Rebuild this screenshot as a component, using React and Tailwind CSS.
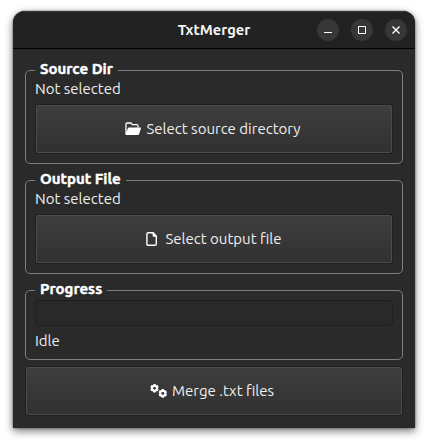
function Group({ title, titleClass, className, children }) {
  return (
    <fieldset className={`min-w-0 rounded-[5px] border border-[#7d7d7d] px-[9px] ${className}`}>
      <legend className={`h-[21px] px-[5px] text-[15px] font-bold leading-[18px] whitespace-nowrap text-white [-webkit-text-stroke:0.4px_white] ${titleClass}`}>
        {title}
      </legend>
      {children}
    </fieldset>
  );
}

function Button({ icon, label, className }) {
  return (
    <button className="block h-[50px] w-full rounded-[3px] border border-[#202020] text-[15px] text-[#efefef]">
      <span className={`flex h-[48px] items-center justify-center rounded-[2px] border border-[#4b4b4b] bg-linear-to-b from-[#3e3e3e] to-[#313131] ${className}`}>
        {icon}
        <span className="leading-[20px] whitespace-nowrap">{label}</span>
      </span>
    </button>
  );
}

function FolderIcon() {
  return (
    <svg className="mr-[5px] h-4 w-4 shrink-0" viewBox="0 0 16 16" fill="none">
      <path d="M1 13V3.3Q1 2 2.2 2H6l1.3 1.6h4.5Q13 3.6 13 5v1.5" stroke="#fff" strokeWidth="1.3" />
      <path d="M3.8 6.5H15.6q.6 0 .4.7L14 13.2q-.2.8-1 .8H1.2q-.8 0-.6-.8L3 7.1q.2-.6.8-.6Z" fill="#fff" />
    </svg>
  );
}

function FileIcon() {
  return (
    <svg className="mr-[5px] h-4 w-4 shrink-0" viewBox="0 0 16 16" fill="none">
      <path d="M4.2 1.7h5L12.3 5v8q0 1.3-1.3 1.3H4.2Q2.9 14.3 2.9 13V3q0-1.3 1.3-1.3Z" stroke="#fff" strokeWidth="1.4" />
      <path d="M8.6 1.5 12.7 5.7H9.6q-1 0-1-1Z" fill="#fff" />
    </svg>
  );
}

function Gear({ cx, cy }) {
  return (
    <g transform={`translate(${cx} ${cy})`} stroke="#fff">
      <circle r="2.5" strokeWidth="2.1" />
      <path
        d="M0-4.3v1.6M0 4.3V2.7M-3.7-2.1l1.4.8M3.7 2.1l-1.4-.8M3.7-2.1l-1.4.8M-3.7 2.1l1.4-.8"
        strokeWidth="2.4"
      />
    </g>
  );
}

function GearsIcon() {
  return (
    <svg className="mr-[5px] h-4 w-[17px] shrink-0" viewBox="0 0 17 16" fill="none">
      <Gear cx={4.5} cy={5.2} />
      <Gear cx={12.8} cy={10.4} />
    </svg>
  );
}

function WindowButton({ children }) {
  return (
    <button className="flex size-[22px] items-center justify-center rounded-full bg-[#373737]">
      <svg className="size-[10px]" viewBox="0 0 10 10" fill="none" stroke="#fff">
        {children}
      </svg>
    </button>
  );
}

export default function App() {
  return (
    <div className="h-[444px] w-[428px] overflow-hidden bg-white pt-[11px] pl-[13px] font-['Ubuntu','Noto_Sans',sans-serif]">
      <div className="flex h-[417px] w-[402px] flex-col overflow-hidden rounded-t-[12px] bg-[#2a2a2a] shadow-[0_3px_8px_rgba(0,0,0,0.55),0_0_2px_rgba(0,0,0,0.6)]">
        <header className="grid h-[38px] shrink-0 grid-cols-[1fr_auto_1fr] items-center border-t border-b border-t-[#373737] border-b-black bg-[#222] px-2">
          <span />
          <h1 className="text-[14.67px] font-bold leading-[20px] text-[#f4f4f4]">TxtMerger</h1>
          <div className="flex justify-end gap-3">
            <WindowButton><path d="M1 7.5h8" /></WindowButton>
            <WindowButton><path d="M1.5 1.5h7v7h-7z" /></WindowButton>
            <WindowButton><path d="m1.5 1.5 7 7m0-7-7 7" strokeWidth="1.4" /></WindowButton>
          </div>
        </header>
        <main className="flex flex-col px-3 pt-[11px] text-[15px] text-[#efefef]">
          <Group title="Source Dir" titleClass="w-[83px]" className="h-[104px]">
            <p className="h-[23px] leading-[15px]">Not selected</p>
            <Button icon={<FolderIcon />} label="Select source directory" className="pr-[2px]" />
          </Group>
          <Group title="Output File" titleClass="w-[91px]" className="mt-[6px] h-[104px]">
            <p className="h-[23px] leading-[15px]">Not selected</p>
            <Button icon={<FileIcon />} label="Select output file" className="pr-[2px]" />
          </Group>
          <Group title="Progress" titleClass="w-[72px]" className="mt-[6px] mb-[6px] h-[80px]">
            <div className="-mt-px h-[26px] rounded-[3px] border border-[#1f1f1f] bg-[#292929]" />
            <p className="mt-[7px] leading-[15px]">Idle</p>
          </Group>
          <Button icon={<GearsIcon />} label="Merge .txt files" className="pr-[4px]" />
        </main>
      </div>
    </div>
  );
}
